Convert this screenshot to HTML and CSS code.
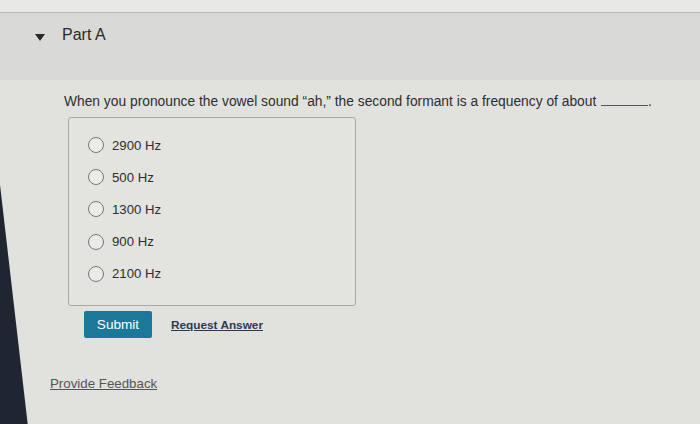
FILE: index.html
```html
<!DOCTYPE html>
<html>
<head>
<meta charset="utf-8">
<link rel="stylesheet" href="styles.css">
</head>
<body>
<div class="page">
  <div class="topstrip"></div>
  <div class="part-header">
    <svg class="caret" width="10" height="7" viewBox="0 0 10 7"><path d="M0 0 H10 L5 7 Z" fill="#2a2a2a"/></svg>
    <span class="part-title">Part A</span>
  </div>
  <div class="part-body">
    <p class="question">When you pronounce the vowel sound “ah,” the second formant is a frequency of about <span class="blank"></span>.</p>
    <div class="choices">
      <label class="choice"><span class="radio"></span><span>2900 Hz</span></label>
      <label class="choice"><span class="radio"></span><span>500 Hz</span></label>
      <label class="choice"><span class="radio"></span><span>1300 Hz</span></label>
      <label class="choice"><span class="radio"></span><span>900 Hz</span></label>
      <label class="choice"><span class="radio"></span><span>2100 Hz</span></label>
    </div>
    <div class="actions">
      <button class="submit">Submit</button>
      <a class="request" href="#">Request Answer</a>
    </div>
    <a class="feedback" href="#">Provide Feedback</a>
  </div>
</div>
</body>
</html>
```
FILE: styles.css
```css
html, body {
  margin: 0;
  padding: 0;
}
body {
  width: 700px;
  height: 424px;
  overflow: hidden;
  font-family: "Liberation Sans", Arial, sans-serif;
  color: #2e2e2e;
  background: #e1e1de;
}
.page {
  height: 424px;
  background: linear-gradient(83.4deg, #1f2631 0, #1f2631 27px, transparent 28px);
}
.topstrip {
  height: 12px;
  background: #e7e7e5;
  border-bottom: 1px solid #b8b8b6;
}
.part-header {
  height: 67px;
  background: #d9d9d7;
  display: flex;
  align-items: flex-start;
  padding-left: 35px;
  padding-top: 12px;
  box-sizing: border-box;
  gap: 17px;
}
.caret {
  margin-top: 9px;
}
.part-title {
  font-size: 16px;
  color: #2a2a2a;
  line-height: 19px;
}
.part-body {
  padding-left: 50px;
  padding-top: 13px;
}
.question {
  margin: 0 0 0 14px;
  font-size: 13.8px;
  line-height: 18px;
  color: #2e2e2e;
}
.blank {
  display: inline-block;
  width: 47px;
  border-bottom: 1px solid #555;
  margin-left: 1px;
  vertical-align: baseline;
}
.choices {
  margin: 6px 0 0 18px;
  width: 288px;
  height: 189px;
  box-sizing: border-box;
  border: 1px solid #a9a9a7;
  border-radius: 3px;
  background: #e3e3e0;
  padding: 11px 0 0 19px;
  display: flex;
  flex-direction: column;
}
.choice {
  display: flex;
  align-items: center;
  gap: 8px;
  height: 32.2px;
  font-size: 13.2px;
  color: #2e2e2e;
}
.radio {
  width: 14px;
  height: 14px;
  border: 1.5px solid #777;
  border-radius: 50%;
  background: #ebebe9;
  flex: none;
}
.actions {
  display: flex;
  align-items: center;
  gap: 19px;
  margin: 5px 0 0 34px;
}
.submit {
  width: 68px;
  height: 27px;
  border: none;
  border-radius: 2px;
  background: #1b7899;
  color: #fff;
  font-family: "Liberation Sans", Arial, sans-serif;
  font-size: 13.6px;
  padding: 0;
}
.request {
  font-size: 11.8px;
  font-weight: bold;
  color: #2d3a55;
  text-decoration: underline;
  margin-top: 1px;
}
.feedback {
  display: inline-block;
  margin-top: 38px;
  font-size: 13.3px;
  color: #555;
  text-decoration: underline;
}
```
